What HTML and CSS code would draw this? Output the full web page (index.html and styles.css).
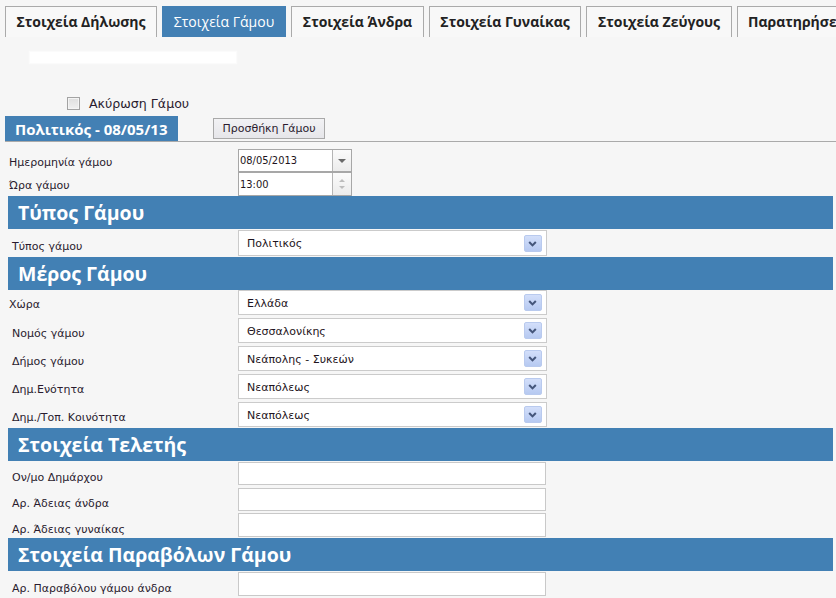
FILE: index.html
```html
<!DOCTYPE html>
<html lang="el">
<head>
<meta charset="utf-8">
<title>Στοιχεία Γάμου</title>
<link rel="stylesheet" href="styles.css">
</head>
<body>
<div class="tabs">
  <div class="tab t1">Στοιχεία Δήλωσης</div>
  <div class="tab t2 active">Στοιχεία Γάμου</div>
  <div class="tab t3">Στοιχεία Άνδρα</div>
  <div class="tab t4">Στοιχεία Γυναίκας</div>
  <div class="tab t5">Στοιχεία Ζεύγους</div>
  <div class="tab t6">Παρατηρήσεις</div>
</div>
<div class="redact"></div>
<label class="cancel"><span class="checkbox"></span><span class="cancel-text">Ακύρωση Γάμου</span></label>
<div class="subtabs">
  <div class="subtab">Πολιτικός - 08/05/13</div>
  <div class="addbtn">Προσθήκη Γάμου</div>
</div>
<div class="form">
  <div class="row r-date">
    <div class="label l-tight">Ημερομηνία γάμου</div>
    <div class="combo"><span class="combo-text">08/05/2013</span><span class="combo-btn"><span class="tri-down"></span></span></div>
  </div>
  <div class="row r-time">
    <div class="label l-tight">Ώρα γάμου</div>
    <div class="combo tall"><span class="combo-text">13:00</span><span class="combo-btn spin"><span class="tri-up small"></span><span class="tri-down small"></span></span></div>
  </div>

  <div class="header">Τύπος Γάμου</div>
  <div class="row r-sel1">
    <div class="label l-sel">Τύπος γάμου</div>
    <div class="select"><span class="select-text">Πολιτικός</span><span class="sel-btn"><svg width="18" height="17" viewBox="0 0 18 17"><path d="M5.5 7 L9 10.5 L12.5 7" fill="none" stroke="#44557a" stroke-width="2.2"/></svg></span></div>
  </div>

  <div class="header h2">Μέρος Γάμου</div>
  <div class="row r-sel first">
    <div class="label l-tight">Χώρα</div>
    <div class="select h25"><span class="select-text">Ελλάδα</span><span class="sel-btn"><svg width="18" height="17" viewBox="0 0 18 17"><path d="M5.5 7 L9 10.5 L12.5 7" fill="none" stroke="#44557a" stroke-width="2.2"/></svg></span></div>
  </div>
  <div class="row r-sel">
    <div class="label l-sel">Νομός γάμου</div>
    <div class="select h25"><span class="select-text">Θεσσαλονίκης</span><span class="sel-btn"><svg width="18" height="17" viewBox="0 0 18 17"><path d="M5.5 7 L9 10.5 L12.5 7" fill="none" stroke="#44557a" stroke-width="2.2"/></svg></span></div>
  </div>
  <div class="row r-sel">
    <div class="label l-sel">Δήμος γάμου</div>
    <div class="select h25"><span class="select-text">Νεάπολης - Συκεών</span><span class="sel-btn"><svg width="18" height="17" viewBox="0 0 18 17"><path d="M5.5 7 L9 10.5 L12.5 7" fill="none" stroke="#44557a" stroke-width="2.2"/></svg></span></div>
  </div>
  <div class="row r-sel">
    <div class="label l-sel">Δημ.Ενότητα</div>
    <div class="select h25"><span class="select-text">Νεαπόλεως</span><span class="sel-btn"><svg width="18" height="17" viewBox="0 0 18 17"><path d="M5.5 7 L9 10.5 L12.5 7" fill="none" stroke="#44557a" stroke-width="2.2"/></svg></span></div>
  </div>
  <div class="row r-sel">
    <div class="label l-sel">Δημ./Τοπ. Κοινότητα</div>
    <div class="select h25"><span class="select-text">Νεαπόλεως</span><span class="sel-btn"><svg width="18" height="17" viewBox="0 0 18 17"><path d="M5.5 7 L9 10.5 L12.5 7" fill="none" stroke="#44557a" stroke-width="2.2"/></svg></span></div>
  </div>

  <div class="header h3">Στοιχεία Τελετής</div>
  <div class="row r-in first">
    <div class="label l-in">Ον/μο Δημάρχου</div>
    <div class="textbox"></div>
  </div>
  <div class="row r-in g3">
    <div class="label l-in">Αρ. Άδειας άνδρα</div>
    <div class="textbox"></div>
  </div>
  <div class="row r-in g2 tall">
    <div class="label l-in">Αρ. Άδειας γυναίκας</div>
    <div class="textbox"></div>
  </div>

  <div class="header h4">Στοιχεία Παραβόλων Γάμου</div>
  <div class="row r-in first tall">
    <div class="label l-in">Αρ. Παραβόλου γάμου άνδρα</div>
    <div class="textbox"></div>
  </div>
</div>
</body>
</html>
```
FILE: styles.css
```css
html, body {
  margin: 0;
  padding: 0;
  background: #f6f6f6;
  overflow: hidden;
}
body {
  width: 836px;
  height: 598px;
  font-family: "DejaVu Sans", Tahoma, sans-serif;
  color: #2a1b2e;
}

/* Top tabs */
.tabs {
  display: flex;
  gap: 5px;
  padding: 6px 0 0 5px;
  height: 31px;
  box-sizing: content-box;
  white-space: nowrap;
  overflow: hidden;
}
.tab {
  flex: none;
  height: 31px;
  box-sizing: border-box;
  border: 1px solid #aaaaaa;
  border-bottom: none;
  background: #f8f8f8;
  font-family: "Open Sans", "Noto Sans", sans-serif;
  font-weight: 700;
  font-size: 14px;
  color: #222222;
  display: flex;
  align-items: center;
  justify-content: center;
  padding-bottom: 2px;
}
.tab.active {
  background: #4380b4;
  border-color: #4380b4;
  color: #ffffff;
  font-weight: 400;
}
.t1 { width: 152px; }
.t2 { width: 124px; }
.t3 { width: 133px; }
.t4 { width: 152px; }
.t5 { width: 146px; }
.t6 { width: 130px; justify-content: flex-start; padding-left: 10px; overflow: hidden; }

.redact {
  margin: 15px 0 0 30px;
  width: 206px;
  height: 11px;
  background: #ffffff;
  box-shadow: 0 0 1px 1px #fbfbfb;
}

/* cancel checkbox */
.cancel {
  display: flex;
  align-items: center;
  margin: 32px 0 0 67px;
  height: 16px;
}
.checkbox {
  width: 13px;
  height: 13px;
  box-sizing: border-box;
  border: 1px solid #a3a3a3;
  background: linear-gradient(#dedede, #f0f0f0);
  box-shadow: inset 0 0 0 1px #f4f4f4;
}
.cancel-text {
  margin-left: 9px;
  font-size: 12.6px;
  color: #2a1b2e;
}

/* sub tabs */
.subtabs {
  display: flex;
  align-items: flex-end;
  margin: 5px 0 0 5px;
  height: 25px;
  border-bottom: 1px solid #aaaaaa;
}
.subtab {
  width: 173px;
  height: 25px;
  background: #4380b4;
  color: #ffffff;
  font-family: "Open Sans", "Noto Sans", sans-serif;
  font-weight: 700;
  font-size: 15px;
  display: flex;
  align-items: center;
  padding-left: 10px;
  box-sizing: border-box;
  white-space: nowrap;
}
.addbtn {
  margin: 0 0 2px 35px;
  width: 112px;
  height: 21px;
  box-sizing: border-box;
  border: 1px solid #a9a9a9;
  background: linear-gradient(#f2f2f4, #e6e6ea);
  font-size: 11px;
  color: #2a1b2e;
  display: flex;
  align-items: center;
  justify-content: center;
}

/* form */
.form {
  margin: 0 3px 0 8px;
  padding-top: 7px;
}
.row {
  display: flex;
  align-items: center;
}
.label {
  width: 230px;
  flex: none;
  font-size: 11px;
  padding-left: 4px;
  box-sizing: border-box;
  padding-top: 3px;
  white-space: nowrap;
}
.label.l-tight { padding-left: 1px; }
.label.l-sel { padding-top: 6px; }
.label.l-in { padding-top: 8px; }

.r-date { height: 23px; }
.r-time { height: 24px; }

.combo {
  width: 114px;
  height: 23px;
  box-sizing: border-box;
  border: 1px solid #a7a7a7;
  background: #ffffff;
  display: flex;
}
.combo.tall { height: 24px; }
.combo-text {
  flex: 1;
  font-family: "DejaVu Sans Condensed", "DejaVu Sans", sans-serif;
  font-size: 11px;
  padding-left: 1px;
  display: flex;
  align-items: center;
  color: #1e1420;
}
.combo-btn {
  width: 18px;
  border-left: 1px solid #b5b5b5;
  background: linear-gradient(#fbfbfb, #ececec);
  display: flex;
  flex-direction: column;
  align-items: center;
  justify-content: center;
  gap: 4px;
}
.tri-down {
  width: 0;
  height: 0;
  border-left: 4px solid transparent;
  border-right: 4px solid transparent;
  border-top: 4px solid #6a6a6a;
}
.tri-down.small { border-left-width: 3px; border-right-width: 3px; border-top: 3px solid #bdbdbd; }
.tri-up.small {
  width: 0;
  height: 0;
  border-left: 3px solid transparent;
  border-right: 3px solid transparent;
  border-bottom: 3px solid #bdbdbd;
}

.header {
  height: 33px;
  background: #4280b4;
  color: #ffffff;
  font-family: "Open Sans", "Noto Sans", sans-serif;
  font-weight: 700;
  font-size: 19.5px;
  display: flex;
  align-items: center;
  padding-left: 10px;
  padding-bottom: 1px;
  box-sizing: border-box;
}
.h2, .h3, .h4 { margin-top: 1px; }

.r-sel1 { height: 26px; margin-top: 1px; }
.r-sel { height: 25px; margin-top: 3px; }
.r-sel.first { margin-top: 0; }

.select {
  width: 309px;
  height: 26px;
  box-sizing: border-box;
  border: 1px solid #cbcbcb;
  background: #ffffff;
  display: flex;
  align-items: center;
  padding: 0 4px 0 8px;
}
.select.h25 { height: 25px; }
.select-text {
  flex: 1;
  font-size: 11px;
  color: #1e1420;
  padding-top: 1px;
}
.sel-btn {
  width: 18px;
  height: 17px;
  box-sizing: border-box;
  border: 1px solid #b9caee;
  border-radius: 2px;
  background: linear-gradient(#d3dffa, #b6c9f1);
  display: flex;
}
.sel-btn svg { display: block; margin: -1px 0 0 -1px; }

.r-in { height: 23px; }
.r-in.first { margin-top: 1px; }
.r-in.g3 { margin-top: 3px; }
.r-in.g2 { margin-top: 2px; }
.r-in.tall { height: 24px; }
.textbox {
  width: 308px;
  height: 100%;
  box-sizing: border-box;
  border: 1px solid #c9c9c9;
  background: #ffffff;
}
```
